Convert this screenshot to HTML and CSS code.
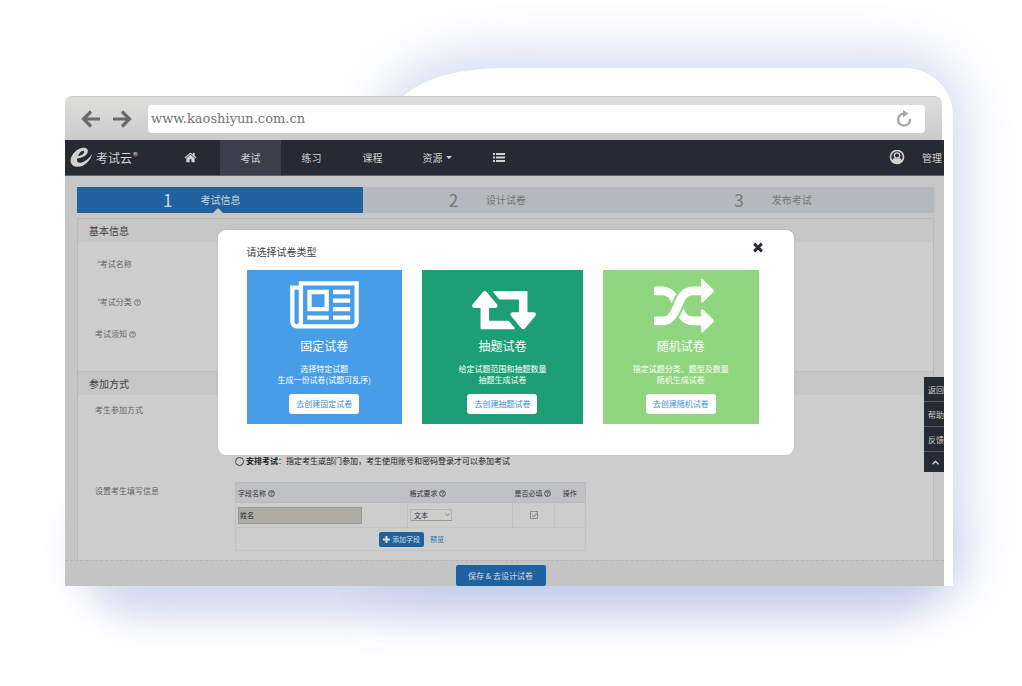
FILE: index.html
```html
<!DOCTYPE html>
<html lang="zh-CN">
<head>
<meta charset="utf-8">
<meta name="viewport" content="width=device-width, initial-scale=1">
<title>考试云</title>
<link rel="stylesheet" href="styles.css">
</head>
<body>
<svg class="defs" aria-hidden="true">
  <symbol id="help" viewBox="0 0 14 14"><circle cx="7" cy="7" r="5.8" fill="none" stroke="currentColor" stroke-width="1.6"/><path d="M5 5.6Q5 3.7 7 3.7T9 5.5Q9 6.5 7 7.6V8.4M7 9.4V10.8" fill="none" stroke="currentColor" stroke-width="1.5"/></symbol>
</svg>
<div class="stage">
  <div class="glow"></div>
  <div class="backdrop"></div>
  <div class="window">
    <header class="chrome">
      <button class="chrome-btn" aria-label="后退"><svg width="20" height="20" viewBox="0 0 20 20"><path d="M19 10H3M10 2.500L2.500 10L10 17.500" fill="none" stroke="currentColor" stroke-width="3.200"/></svg></button>
      <button class="chrome-btn" aria-label="前进"><svg width="20" height="20" viewBox="0 0 20 20"><path d="M1 10H17M10 2.500L17.500 10L10 17.500" fill="none" stroke="currentColor" stroke-width="3.200"/></svg></button>
      <div class="address">
        <input class="url" type="text" value="www.kaoshiyun.com.cn" aria-label="网址">
        <button class="reload" aria-label="刷新"><svg width="18" height="18" viewBox="0 0 18 18"><path d="M9 3.600A6 6 0 1 0 15 9" fill="none" stroke="currentColor" stroke-width="2.200"/><path d="M8 0L13.500 3.600L8 7.200Z" fill="currentColor"/></svg></button>
      </div>
    </header>

    <nav class="nav">
      <a class="logo" href="#">
        <svg width="23" height="21" viewBox="0 0 23 21"><path d="M22.500 6.500C20 15 13 20.500 6.500 19.800C0 19 -1 12.500 3 7C7 1.500 14 -1 17 2C20 5.500 15 11 7 11.500C6.500 15 8.500 16.500 12 15.500C16.500 14 19.500 10.500 22.500 6.500ZM8 9C12 8.500 14.800 6 14 4.300C13 2.800 9.500 5 8 9Z" fill="currentColor"/></svg>
        <span class="logo-text">考试云<sup>®</sup></span>
      </a>
      <a class="nav-item" href="#" aria-label="首页"><svg width="13" height="13" viewBox="0 0 1792 1792"><path fill="currentColor" d="M1472 992v480q0 26-19 45t-45 19h-384v-384h-256v384h-384q-26 0-45-19t-19-45v-480q0-1 .5-3t.5-3l575-474 575 474q1 2 1 6zm223-69l-62 74q-8 9-21 11h-3q-13 0-21-7l-692-577-692 577q-12 8-24 7-13-2-21-11l-62-74q-8-10-7-23.500t11-21.500l719-599q32-26 76-26t76 26l244 204v-195q0-14 9-23t23-9h192q14 0 23 9t9 23v408l219 182q10 8 11 21.500t-7 23.500z"/></svg></a>
      <a class="nav-item active" href="#">考试</a>
      <a class="nav-item" href="#">练习</a>
      <a class="nav-item" href="#">课程</a>
      <a class="nav-item wide" href="#">资源<span class="caret"></span></a>
      <a class="nav-item list" href="#" aria-label="列表"><svg width="12" height="9" viewBox="0 0 12 9"><path fill="currentColor" d="M0 0h2v2H0zM3 0h9v2H3zM0 3.500h2v2H0zM3 3.500h9v2H3zM0 7h2v2H0zM3 7h9v2H3z"/></svg></a>
      <a class="user" href="#"><svg width="16" height="16" viewBox="0 0 16 16"><circle cx="8" cy="7" r="6.500" fill="none" stroke="currentColor" stroke-width="1.600"/><circle cx="8" cy="5.500" r="2.700" fill="none" stroke="currentColor" stroke-width="1.300"/><path fill="currentColor" d="M2.500 11Q4 8 6 8Q8 9.600 10 8Q12 8 13.500 11Q11.500 14 8 14T2.500 11Z"/></svg><span>管理</span></a>
    </nav>

    <main class="content">
      <ol class="steps">
        <li class="step current"><span class="num">1</span><span>考试信息</span></li>
        <li class="step"><span class="num">2</span><span>设计试卷</span></li>
        <li class="step"><span class="num">3</span><span>发布考试</span></li>
      </ol>
      <form class="panel">
        <h2 class="section-title">基本信息</h2>
        <div class="basic">
          <div class="line"><span class="star">*</span>考试名称</div>
          <div class="line"><span class="star">*</span>考试分类 <svg class="help"><use href="#help"/></svg></div>
          <div class="line short">考试须知 <svg class="help"><use href="#help"/></svg></div>
        </div>
        <h2 class="section-title second">参加方式</h2>
        <div class="join">
          <div class="join-label">考生参加方式</div>
          <div class="modes">
            <label class="mode"><input type="radio" name="mode"><span><b>安排考试</b>：指定考生或部门参加，考生使用账号和密码登录才可以参加考试</span></label>
          </div>
          <div class="join-label info">设置考生填写信息</div>
          <table class="fields">
            <thead>
              <tr><th class="c-name">字段名称 <svg class="help"><use href="#help"/></svg></th><th class="c-format">格式要求 <svg class="help"><use href="#help"/></svg></th><th class="c-need">是否必填 <svg class="help"><use href="#help"/></svg></th><th class="c-act">操作</th></tr>
            </thead>
            <tbody>
              <tr class="entry">
                <td><input class="field" type="text" value="姓名" aria-label="字段名称"></td>
                <td><div class="pick-box"><select class="pick" aria-label="格式要求"><option>文本</option></select><svg class="chevron" width="5" height="4" viewBox="0 0 5 4"><path d="M.5 .5L2.500 2.800L4.500 .5" fill="none" stroke="currentColor"/></svg></div></td>
                <td class="mid"><input class="tick" type="checkbox" checked disabled aria-label="是否必填"></td>
                <td></td>
              </tr>
              <tr class="add-row"><td colspan="4"><div class="add"><button class="add-btn" type="button"><svg width="7" height="7" viewBox="0 0 7 7"><path d="M3.500 0V7M0 3.500H7" stroke="currentColor" stroke-width="2"/></svg>添加字段</button><a href="#">预览</a></div></td></tr>
            </tbody>
          </table>
        </div>
      </form>
    </main>
    <footer class="foot"><button class="save" type="button">保存 &amp; 去设计试卷</button></footer>

    <aside class="tools">
      <a href="#">返回</a>
      <a href="#">帮助</a>
      <a href="#">反馈</a>
      <a class="up" href="#" aria-label="回到顶部"><svg width="7" height="5" viewBox="0 0 7 5"><path d="M.5 4.300L3.500 1.300L6.500 4.300" fill="none" stroke="currentColor" stroke-width="1.600"/></svg></a>
    </aside>

    <section class="modal" role="dialog" aria-labelledby="modal-title">
      <div class="modal-head">
        <h1 id="modal-title">请选择试卷类型</h1>
        <button class="close" aria-label="关闭"><svg width="14" height="14" viewBox="0 0 1792 1792"><path fill="currentColor" d="M1490 1322q0 40-28 68l-136 136q-28 28-68 28t-68-28l-294-294-294 294q-28 28-68 28t-68-28l-136-136q-28-28-28-68t28-68l294-294-294-294q-28-28-28-68t28-68l136-136q28-28 68-28t68 28l294 294 294-294q28-28 68-28t68 28l136 136q28 28 28 68t-28 68l-294 294 294 294q28 28 28 68z"/></svg></button>
      </div>
      <div class="cards">
        <article class="card blue">
          <svg width="69" height="60" viewBox="0 0 2048 1792"><path fill="currentColor" d="M1024 512h-384v384h384v-384zm128 640v128h-640v-128h640zm0-768v640h-640v-640h640zm640 768v128h-512v-128h512zm0-256v128h-512v-128h512zm0-256v128h-512v-128h512zm0-256v128h-512v-128h512zm-1536 960v-960h-128v960q0 26 19 45t45 19 45-19 19-45zm1664 0v-1088h-1536v1088q0 33-11 64h1483q26 0 45-19t19-45zm128-1216v1216q0 80-56 136t-136 56h-1664q-80 0-136-56t-56-136v-1088h256v-128h1792z"/></svg>
          <h3>固定试卷</h3>
          <p>选择特定试题<br>生成一份试卷(试题可乱序)</p>
          <button class="go">去创建固定试卷</button>
        </article>
        <article class="card teal">
          <svg width="68" height="60" viewBox="-120 -30 2040 1792"><path fill="currentColor" d="M1280 1504q0 13-9.500 22.500t-22.500 9.500h-960q-8 0-13.500-2t-9-7-5.500-8-3-11.500-1-11.500v-600h-192q-26 0-45-19t-19-45q0-24 15-41l320-384q19-22 49-22t49 22l320 384q15 17 15 41 0 26-19 45t-45 19h-192v384h576q16 0 25 11l160 192q7 10 7 21zm640-416q0 24-15 41l-320 384q-20 23-49 23t-49-23l-320-384q-15-17-15-41 0-26 19-45t45-19h192v-384h-576q-16 0-25-12l-160-192q-7-9-7-20 0-13 9.500-22.500t22.500-9.500h960q8 0 13.500 2t9 7 5.500 8 3 11.500 1 11.500v600h192q26 0 45 19t19 45z"/></svg>
          <h3>抽题试卷</h3>
          <p>给定试题范围和抽题数量<br>抽题生成试卷</p>
          <button class="go">去创建抽题试卷</button>
        </article>
        <article class="card green">
          <svg width="66" height="60" viewBox="-180 -30 1972 1792"><path fill="currentColor" d="M666 481q-60 92-137 273-22-45-37-72.500t-40.500-63.500-51-56.500-63-35-81.500-14.500h-224q-14 0-23-9t-9-23v-192q0-14 9-23t23-9h224q250 0 410 225zm1126 799q0 14-9 23l-320 320q-9 9-23 9-13 0-22.500-9.500t-9.500-22.500v-192q-32 0-85 .5t-81 1-73-1-71-5-64-10.500-63-18.500-58-28.500-59-40-55-53.500-56-69.500q59-93 136-273 22 45 37 72.500t40.500 63.500 51 56.500 63 35 81.500 14.500h256v-192q0-14 9-23t23-9q12 0 24 10l319 319q9 9 9 23zm0-896q0 14-9 23l-320 320q-9 9-23 9-13 0-22.500-9.500t-9.500-22.500v-192h-256q-48 0-87 15t-69 45-51 61.500-45 77.500q-32 62-78 171-29 66-49.500 111t-54 105-64 100-74 83-90 68.500-106.500 42-128 16.500h-224q-14 0-23-9t-9-23v-192q0-14 9-23t23-9h224q48 0 87-15t69-45 51-61.500 45-77.500q32-62 78-171 29-66 49.500-111t54-105 64-100 74-83 90-68.500 106.500-42 128-16.500h256v-192q0-14 9-23t23-9q12 0 24 10l319 319q9 9 9 23z"/></svg>
          <h3>随机试卷</h3>
          <p>指定试题分类、题型及数量<br>随机生成试卷</p>
          <button class="go">去创建随机试卷</button>
        </article>
      </div>
    </section>
  </div>
</div>
</body>
</html>
```
FILE: styles.css
```css
* { box-sizing: border-box; }
body {
  margin: 0;
  background: #fff;
  overflow-x: hidden;
  font: 8px/12px "Noto Sans CJK SC", "Noto Sans", sans-serif;
  color: #444;
}
button, input, select { font: inherit; color: inherit; margin: 0; }
button { border: 0; padding: 0; background: none; cursor: pointer; }
a { color: inherit; text-decoration: none; }
svg { display: block; flex: none; }
h1, h2, h3, p, ol { margin: 0; padding: 0; font-weight: 400; }
.defs { position: absolute; width: 0; height: 0; }

.stage { position: relative; padding: 96px 78px 100px 65px; overflow: hidden; }
.glow {
  position: absolute;
  left: 76px; right: 70px; top: 480px; bottom: 68px;
  border-radius: 80px;
  background: #d3d9ef;
  filter: blur(18px);
}
.backdrop {
  position: absolute;
  left: 392px; right: 69px; top: 68px; bottom: 100px;
  border-radius: 110px 48px 0 0 / 50px 48px 0 0;
  background: #fff;
  box-shadow: 0 -4px 56px 8px rgba(176, 189, 230, 0.6);
}
.window { position: relative; }

.chrome {
  display: flex;
  align-items: center;
  gap: 11px;
  height: 44px;
  margin-right: 2px;
  padding: 1px 17px 0 16px;
  border-radius: 7px 8px 0 0;
  background: linear-gradient(#dededc, #cbcbcb);
  border-top: 1px solid #cdcdcd;
  color: #6a6a6c;
}
.address {
  display: flex;
  flex: 1;
  align-items: center;
  height: 28px;
  margin-left: 5px;
  padding: 0 12px 0 3px;
  border-radius: 4px;
  background: #fff;
}
.url {
  flex: 1;
  min-width: 0;
  border: 0;
  padding: 0;
  background: none;
  font: 13px/20px "DejaVu Serif", serif;
  color: #737373;
}
.reload { color: #a5a5a1; }

.nav {
  display: flex;
  align-items: stretch;
  height: 36px;
  background: #252a35;
  border-bottom: 1px solid #5e626a;
  color: #d2d2d2;
  font-size: 10px;
}
.logo { display: flex; align-items: center; gap: 3px; width: 95px; padding-left: 5px; }
.logo-text { font-size: 12px; line-height: 20px; }
.logo sup { margin-left: 1px; font-size: 10px; line-height: 8px; vertical-align: 3px; }
.nav-item { display: flex; align-items: center; justify-content: center; gap: 3px; width: 61px; }
.nav-item:nth-child(2) { width: 60px; }
.nav-item.wide { width: 68px; }
.nav-item.list { width: 56px; }
.nav-item.active { background: #3a404b; }
.caret { border: 3px solid transparent; border-top-color: currentColor; border-bottom: 0; }
.user { display: flex; align-items: center; gap: 17px; margin-left: auto; padding-right: 2px; }

.content { padding: 11px 10px 0 12px; background: #c6c6c6; }
.steps { display: grid; grid-template-columns: repeat(3, 1fr); list-style: none; background: #b4b9bf; }
.step {
  position: relative;
  display: flex;
  align-items: center;
  gap: 28px;
  height: 26px;
  padding-left: 86px;
  font-size: 10px;
  color: #777;
}
.num { font-size: 17px; line-height: 26px; }
.current { background: #1f629f; color: #d5d5d5; }
.current::after {
  content: "";
  position: absolute;
  left: 136px; bottom: 0;
  border: 5px solid transparent;
  border-bottom-color: #c6c6c6;
  border-top: 0;
}

.panel { margin-top: 5px; border: 1px solid #b5b9c0; border-width: 1px 1px 0; background: #cdcdcd; }
.section-title { padding: 0 11px; font-size: 10px; line-height: 23px; background: #c6c6c6; color: #3e3e3e; }
.second { border-top: 1px dashed #babcc0; }
.basic { min-height: 129px; padding: 3px 17px 0; color: #666; }
.line { display: flex; align-items: center; gap: 2px; height: 38px; padding-left: 2px; }
.star { margin-right: -3px; color: #8a7440; }
.line.short { height: 26px; padding-left: 0; }
.help { display: inline-block; width: 7px; height: 7px; vertical-align: -1px; }

.join {
  display: grid;
  grid-template-columns: 140px 351px;
  row-gap: 15px;
  padding: 9px 17px 9px;
  color: #666;
}
.info { padding-top: 3px; }
.modes { display: flex; align-items: flex-end; min-height: 63px; color: #222; }
.mode { display: flex; align-items: center; gap: 2px; white-space: nowrap; }
.mode input {
  appearance: none;
  width: 9px; height: 9px;
  border: 1px solid #444;
  border-radius: 50%;
}
.mode b { font-weight: 700; }

.fields {
  width: 351px;
  table-layout: fixed;
  border-collapse: collapse;
  border: 1px solid #b5b9c0;
  font-size: 7px;
  color: #333;
}
.fields th { height: 20px; padding: 0 2px; background: #bfc1c5; text-align: left; font-weight: 400; border-bottom: 1px solid #b5b9c0; }
.fields td { padding: 0 2px; border: 1px solid #c3c3c6; }
.fields .c-name { width: 172px; }
.fields .c-format { width: 105px; }
.fields .c-need { width: 42px; white-space: nowrap; }
.fields .c-act { text-align: center; }
.entry td { height: 25px; }
.field {
  display: block;
  width: 124px; height: 17px;
  padding: 0 1px;
  border: 1px solid #999;
  background: #adaca4;
  color: #222;
}
.pick-box { position: relative; width: 42px; }
.pick {
  appearance: none;
  display: block;
  width: 42px; height: 12px;
  padding: 0 3px;
  border: 1px solid #b4b4b4;
  border-bottom-color: #998;
  background: #cdcdcd;
  line-height: 10px;
}
.chevron { position: absolute; right: 2px; top: 4px; color: #888; }
.fields .mid { text-align: center; }
.tick {
  appearance: none;
  display: block;
  width: 8px; height: 8px;
  margin: 0 auto;
  border: 1px solid #8f8f8f;
}
.tick:checked::after {
  content: "";
  display: block;
  width: 4px; height: 2px;
  margin: 1px;
  border: solid #8f8f8f;
  border-width: 0 0 1px 1px;
  transform: rotate(-45deg);
}
.add-row td { height: 23px; }
.add { display: flex; align-items: center; justify-content: center; gap: 6px; padding-left: 2px; }
.add-btn {
  display: flex;
  align-items: center;
  gap: 2px;
  height: 15px;
  padding: 0 4px;
  border-radius: 2px;
  background: #1f629f;
  color: #ddd;
}
.add a { color: #1f6fb2; }

.foot {
  display: flex;
  justify-content: center;
  padding: 4px 8px 0 0;
  border-top: 1px dashed #b0b5c4;
  background: #c4c4c4;
}
.save { width: 90px; height: 21px; border-radius: 2px; background: #1f629f; color: #ddd; }

.tools {
  position: absolute;
  right: 0; top: 281px;
  width: 20px;
  overflow: hidden;
  background: #252a35;
  color: #ccc;
}
.tools a {
  display: flex;
  align-items: center;
  height: 25px;
  padding: 2px 0 0 4px;
  border-bottom: 1px solid #555a63;
  white-space: nowrap;
}
.tools .up { height: 20px; padding: 0 0 0 8px; border: 0; }

.modal {
  position: absolute;
  left: 50%; top: 134px;
  width: 576px;
  margin-left: -287px;
  padding: 9px 35px 31px 29px;
  border-radius: 8px;
  background: #fff;
  box-shadow: 0 0 2px #a7aebb;
}
.modal-head { display: flex; align-items: flex-start; justify-content: space-between; height: 31px; }
.modal-head h1 { padding-top: 5px; font-size: 10px; line-height: 16px; color: #444; }
.close { margin-right: -6px; padding-top: 1px; color: #252a35; }
.cards { display: grid; grid-template-columns: 155fr 161fr 155fr; gap: 20px; }
.card {
  display: flex;
  flex-direction: column;
  align-items: center;
  padding: 7px 0 10px;
  color: #fff;
  text-align: center;
}
.card h3 { font-size: 12px; line-height: 18px; }
.card p { padding: 8px 0 9px; line-height: 11px; }
.go { width: 70px; height: 20px; border-radius: 3px; background: #fff; }
.blue { background: #479de7; }
.teal { background: #1d9f75; }
.green { background: #90d67f; }
.blue .go, .teal .go, .green .go { color: #3b8dd6; }
```
